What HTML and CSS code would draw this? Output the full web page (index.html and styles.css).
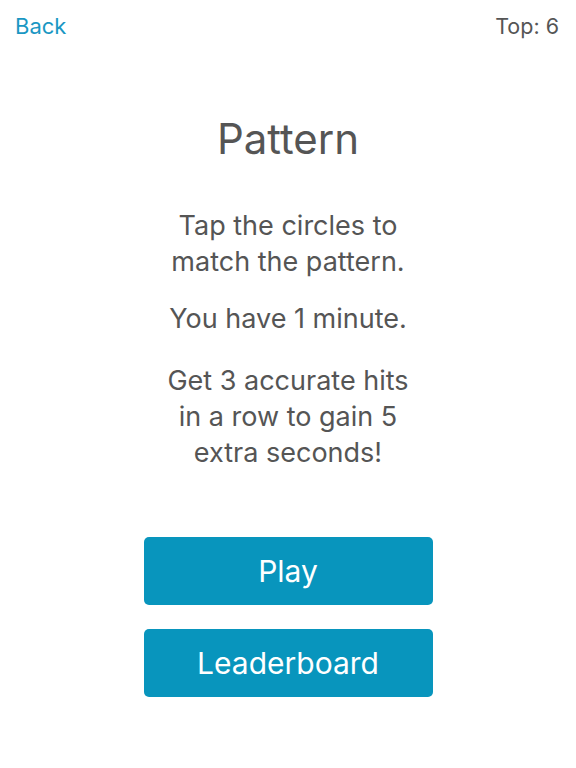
FILE: index.html
```html
<!DOCTYPE html>
<html lang="en">
<head>
    <meta charset="UTF-8">
    <meta name="viewport" content="width=device-width, initial-scale=1.0">
    <title>Pattern</title>
    <link rel="stylesheet" href="styles.css">
</head>
<body>
    <div class="screen">
        <div class="topbar">
            <a href="#" class="back">Back</a>
            <span class="top-score">Top: 6</span>
        </div>

        <div class="intro">
            <h1 class="title">Pattern</h1>
            <p class="info">Tap the circles to<br>match the pattern.</p>
            <p class="info">You have 1 minute.</p>
            <p class="info">Get 3 accurate hits<br>in a row to gain 5<br>extra seconds!</p>
        </div>

        <div class="actions">
            <a href="#" class="btn">Play</a>
            <a href="#" class="btn">Leaderboard</a>
        </div>
    </div>
</body>
</html>
```

FILE: styles.css
```css
body {
    margin: 0;
    padding: 0;
    background-color: #ffffff;
    font-family: Inter, "Noto Sans", sans-serif;
    color: #555555;
}
.screen {
    width: 576px;
    height: 768px;
}
.topbar {
    display: flex;
    justify-content: space-between;
    align-items: center;
    padding: 12px 17px 0 15px;
    height: 28px;
}
.back {
    color: #1a97c3;
    text-decoration: none;
    font-size: 22px;
}
.top-score {
    font-size: 21.5px;
    color: #555555;
}
.intro {
    display: flex;
    flex-direction: column;
    align-items: center;
    text-align: center;
}
.title {
    font-size: 42px;
    font-weight: 400;
    margin: 72px 0 0 0;
    line-height: 54px;
}
.info {
    font-size: 27px;
    line-height: 36px;
    margin: 0;
}
.info:nth-of-type(1) {
    margin-top: 42px;
}
.info:nth-of-type(2) {
    margin-top: 21px;
}
.info:nth-of-type(3) {
    margin-top: 26px;
}
.actions {
    display: flex;
    flex-direction: column;
    align-items: center;
    gap: 24px;
    margin-top: 66px;
}
.btn {
    display: flex;
    justify-content: center;
    align-items: center;
    width: 289px;
    height: 68px;
    background-color: #0895bd;
    color: #ffffff;
    font-size: 30px;
    text-decoration: none;
    border-radius: 5px;
}
```
